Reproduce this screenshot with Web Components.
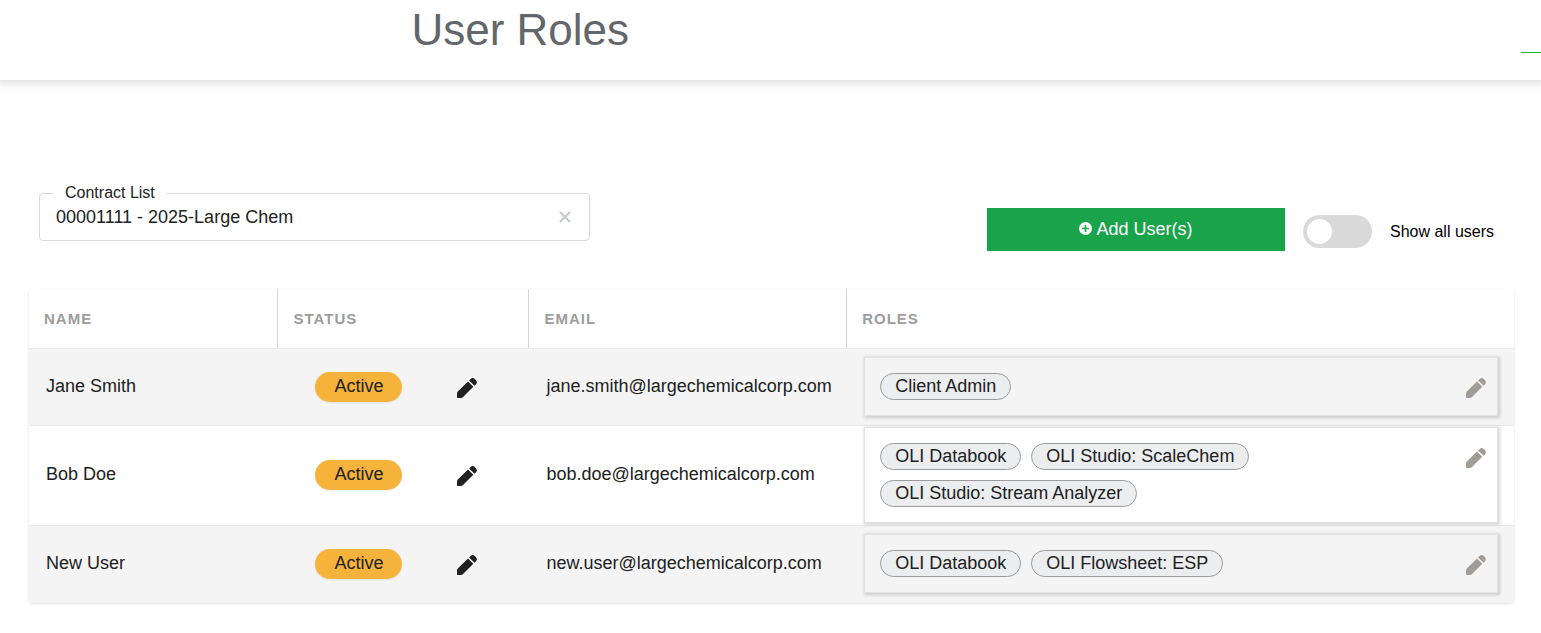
<!DOCTYPE html>
<html lang="en">
<head>
  <meta charset="utf-8">
  <meta name="viewport" content="width=device-width, initial-scale=1">
  <title>User Roles</title>
  <style>
    body {
      margin: 0;
      background: #fff;
      color: #212121;
      font: 18px/24px "Liberation Sans", Arial, sans-serif;
    }
    main {
      padding: 104px 27px 30px 29px;
    }
    .toolbar {
      display: flex;
      align-items: flex-start;
      justify-content: space-between;
      padding: 0 20px 0 10px;
      margin-bottom: 38px;
    }
    contract-field {
      flex: 0 1 551px;
    }
    .actions {
      display: flex;
      align-items: center;
      gap: 18px;
      padding-top: 24px;
    }
  </style>
</head>
<body>
  <page-header>User Roles</page-header>
  <main>
    <div class="toolbar">
      <contract-field label="Contract List" value="00001111 - 2025-Large Chem"></contract-field>
      <div class="actions">
        <add-button>Add User(s)</add-button>
        <toggle-switch>Show all users</toggle-switch>
      </div>
    </div>
    <users-table></users-table>
  </main>

  <script>

    /**
     * PageHeader
     *  - Element: page-header
     */
    class PageHeader extends HTMLElement {

      constructor() {
        super();

        const shadowRoot = this.attachShadow({mode: 'open'});
        shadowRoot.innerHTML = `
          <style>
            :host {
              display: block;
              box-shadow: 0 0 8px 4px rgba(0, 0, 0, 0.12);
            }
            header {
              display: flex;
              justify-content: space-between;
              height: 80px;
              padding-left: 26.7%;
            }
            h1 {
              margin: 0;
              padding-top: 4px;
              color: #63666a;
              font-size: 44px;
              font-weight: 400;
              line-height: 52px;
            }
            .marker {
              width: 20px;
              height: 52px;
              border-bottom: 1px solid #22b53a;
            }
          </style>
          <header>
            <h1><slot></slot></h1>
            <div class="marker"></div>
          </header>
        `;
      }

    }

    customElements.define('page-header', PageHeader);

    /**
     * ContractField
     *  - Element: contract-field
     *  - Description: outlined text field with a clear button
     */
    class ContractField extends HTMLElement {

      constructor() {
        super();

        const shadowRoot = this.attachShadow({mode: 'open'});
        shadowRoot.innerHTML = `
          <style>
            :host {
              display: block;
            }
            fieldset {
              display: flex;
              align-items: center;
              min-width: 0;
              margin: 0;
              padding: 0 16px;
              border: 1px solid #d9d9dc;
              border-radius: 4px;
            }
            legend {
              margin-left: -3px;
              padding: 0 12px;
              font-size: 16px;
              line-height: 18px;
            }
            input {
              flex: 1;
              min-width: 0;
              height: 30px;
              padding: 0 0 8px;
              border: 0;
              outline: 0;
              background: none;
              color: inherit;
              font: inherit;
            }
            button {
              display: flex;
              padding: 0 2px 8px;
              border: 0;
              background: none;
              cursor: pointer;
            }
          </style>
          <fieldset>
            <legend><label for="contract"></label></legend>
            <input id="contract" type="text">
            <button type="button" aria-label="Clear">
              <svg width="12" height="12" viewBox="0 0 12 12" fill="none" stroke="#c4c8cc" stroke-width="2"><path d="M1 1l10 10M11 1L1 11"/></svg>
            </button>
          </fieldset>
        `;

        this.input = shadowRoot.querySelector('input');
        this.label = shadowRoot.querySelector('label');

        shadowRoot.querySelector('button').addEventListener('click', () => {
          this.input.value = '';
          this.input.focus();
        });
      }

      connectedCallback() {
        this.label.textContent = this.getAttribute('label');
        this.input.value = this.getAttribute('value');
      }

    }

    customElements.define('contract-field', ContractField);

    /**
     * AddButton
     *  - Element: add-button
     */
    class AddButton extends HTMLElement {

      constructor() {
        super();

        const shadowRoot = this.attachShadow({mode: 'open'});
        shadowRoot.innerHTML = `
          <style>
            :host {
              display: block;
            }
            button {
              display: flex;
              align-items: center;
              justify-content: center;
              gap: 4px;
              width: 298px;
              height: 43px;
              padding: 0 0 2px;
              border: 0;
              background: #19a34a;
              color: #fff;
              font: inherit;
              cursor: pointer;
            }
          </style>
          <button type="button">
            <svg width="13" height="13" viewBox="0 0 13 13"><circle cx="6.5" cy="6.5" r="6.5" fill="#fff"/><path d="M6.5 3v7M3 6.5h7" stroke="#19a34a" stroke-width="1.6"/></svg>
            <span><slot></slot></span>
          </button>
        `;
      }

    }

    customElements.define('add-button', AddButton);

    /**
     * ToggleSwitch
     *  - Element: toggle-switch
     */
    class ToggleSwitch extends HTMLElement {

      constructor() {
        super();

        const shadowRoot = this.attachShadow({mode: 'open'});
        shadowRoot.innerHTML = `
          <style>
            :host {
              display: block;
              color: #000;
              font-size: 16px;
            }
            label {
              display: flex;
              align-items: center;
              gap: 18px;
              padding-top: 4px;
              cursor: pointer;
            }
            input {
              appearance: none;
              box-sizing: border-box;
              display: flex;
              align-items: center;
              width: 69px;
              height: 33px;
              margin: 0;
              padding: 0 4px;
              border-radius: 17px;
              background: #d9d9d9;
              cursor: pointer;
            }
            input::before {
              content: "";
              width: 25px;
              height: 25px;
              border-radius: 50%;
              background: #fff;
            }
            input:checked {
              justify-content: flex-end;
              background: #19a34a;
            }
          </style>
          <label>
            <input type="checkbox" role="switch">
            <span><slot></slot></span>
          </label>
        `;
      }

    }

    customElements.define('toggle-switch', ToggleSwitch);

    /**
     * EditButton
     *  - Element: edit-button
     *  - Description: pencil icon, takes the current text color
     */
    class EditButton extends HTMLElement {

      constructor() {
        super();

        const shadowRoot = this.attachShadow({mode: 'open'});
        shadowRoot.innerHTML = `
          <style>
            :host {
              display: block;
            }
            button {
              display: block;
              padding: 0;
              border: 0;
              background: none;
              color: inherit;
              cursor: pointer;
            }
            svg {
              display: block;
            }
          </style>
          <button type="button" aria-label="Edit">
            <svg width="22" height="22" viewBox="0 0 22 22" fill="currentColor">
              <path d="M1.8 14.6L12 4.5l5.3 5.3L7 20q-.8.9-1.8.9H1.6q-.6 0-.6-.6v-3.6q0-1.2.8-2.1z"/>
              <path d="M13.1 3.4l1.5-1.5q2.2-1.9 4.4.3l.8.8q2 2.2.2 4.2l-1.5 1.5z"/>
            </svg>
          </button>
        `;
      }

    }

    customElements.define('edit-button', EditButton);

    /**
     * StatusPill
     *  - Element: status-pill
     */
    class StatusPill extends HTMLElement {

      constructor() {
        super();

        const shadowRoot = this.attachShadow({mode: 'open'});
        shadowRoot.innerHTML = `
          <style>
            :host {
              display: block;
              box-sizing: border-box;
              width: 87px;
              height: 30px;
              border-radius: 15px;
              background: #f5b33b;
              line-height: 28px;
              text-align: center;
              box-shadow: 0 1px 2px rgba(0, 0, 0, 0.08);
            }
          </style>
          <slot></slot>
        `;
      }

    }

    customElements.define('status-pill', StatusPill);

    /**
     * RoleChip
     *  - Element: role-chip
     */
    class RoleChip extends HTMLElement {

      constructor() {
        super();

        const shadowRoot = this.attachShadow({mode: 'open'});
        shadowRoot.innerHTML = `
          <style>
            :host {
              display: block;
              padding: 0 14px;
              border: 1px solid #9b9b9b;
              border-radius: 14px;
              background: #ebedef;
              line-height: 25px;
              white-space: nowrap;
            }
          </style>
          <slot></slot>
        `;
      }

    }

    customElements.define('role-chip', RoleChip);

    /**
     * RoleBox
     *  - Element: role-box
     *  - Description: framed list of role chips with an edit button
     */
    class RoleBox extends HTMLElement {

      constructor() {
        super();

        const shadowRoot = this.attachShadow({mode: 'open'});
        shadowRoot.innerHTML = `
          <style>
            :host {
              display: flex;
              align-items: flex-start;
              justify-content: space-between;
              padding: 15px 10px 15px 15px;
              border: 1px solid #e4e3e3;
              box-shadow: 1px 1px 3px 1px rgba(60, 50, 50, 0.2);
            }
            .chips {
              display: flex;
              flex-wrap: wrap;
              gap: 10px;
            }
            edit-button {
              padding-top: 4px;
              color: #a19c96;
            }
          </style>
          <div class="chips"><slot></slot></div>
          <edit-button></edit-button>
        `;
      }

    }

    customElements.define('role-box', RoleBox);

    /**
     * UsersTable
     *  - Element: users-table
     */
    class UsersTable extends HTMLElement {

      #users = [
        {name: 'Jane Smith', status: 'Active', email: 'jane.smith@largechemicalcorp.com', roles: ['Client Admin']},
        {name: 'Bob Doe', status: 'Active', email: 'bob.doe@largechemicalcorp.com', roles: ['OLI Databook', 'OLI Studio: ScaleChem', 'OLI Studio: Stream Analyzer']},
        {name: 'New User', status: 'Active', email: 'new.user@largechemicalcorp.com', roles: ['OLI Databook', 'OLI Flowsheet: ESP']}
      ];

      constructor() {
        super();

        const shadowRoot = this.attachShadow({mode: 'open'});
        shadowRoot.innerHTML = `
          <style>
            :host {
              display: block;
              overflow: hidden;
              border-radius: 4px;
              box-shadow: 0 1px 3px rgba(0, 0, 0, 0.12);
            }
            table {
              width: 100%;
              border-spacing: 0;
              table-layout: fixed;
            }
            th, td {
              box-sizing: border-box;
              border-bottom: 1px solid #ebebeb;
              text-align: left;
            }
            th {
              height: 60px;
              padding: 0 15px;
              color: #9c9c9c;
              font-size: 15px;
              letter-spacing: 1px;
              text-transform: uppercase;
            }
            th:not(:last-child) {
              border-right: 1px solid #d6d6d6;
            }
            td {
              height: 77px;
              padding: 0 16px 3px 17px;
            }
            td.roles {
              padding-top: 1px;
              padding-bottom: 2px;
            }
            tbody tr:nth-child(odd) {
              background: #f4f4f4;
            }
            tbody tr:last-child td {
              border-bottom-color: transparent;
            }
            .name { width: 16.8%; }
            .status { width: 16.9%; }
            .email { width: 21.4%; }
            .state {
              display: flex;
              align-items: center;
              gap: 54px;
              padding: 2px 0 0 20px;
            }
            .state edit-button {
              padding-top: 2px;
            }
          </style>
          <table>
            <thead>
              <tr>
                <th class="name">Name</th>
                <th class="status">Status</th>
                <th class="email">Email</th>
                <th>Roles</th>
              </tr>
            </thead>
            <tbody></tbody>
          </table>
        `;
      }

      connectedCallback() {
        this.shadowRoot.querySelector('tbody').innerHTML = this.#users.map(user => `
          <tr>
            <td>${ user.name }</td>
            <td><div class="state"><status-pill>${ user.status }</status-pill><edit-button></edit-button></div></td>
            <td>${ user.email }</td>
            <td class="roles"><role-box>${ user.roles.map(role => `<role-chip>${ role }</role-chip>`).join('') }</role-box></td>
          </tr>
        `).join('');
      }

    }

    customElements.define('users-table', UsersTable);

  </script>
</body>
</html>
